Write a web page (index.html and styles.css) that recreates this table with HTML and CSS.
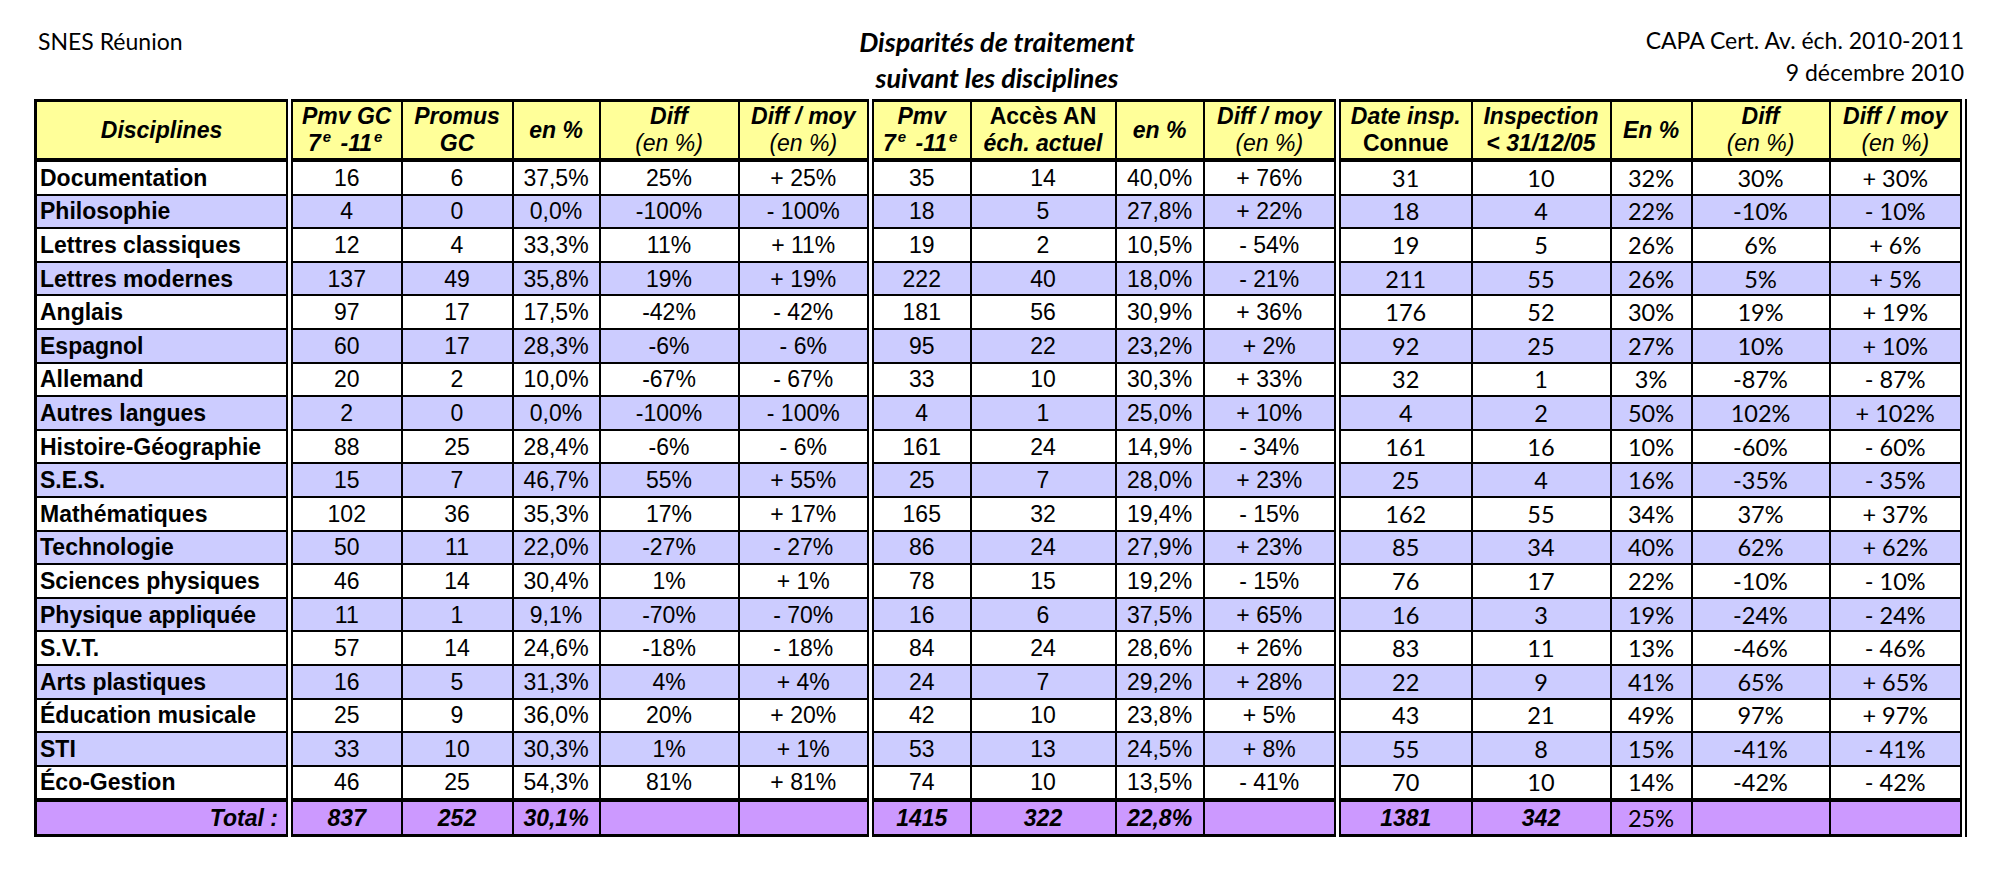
FILE: index.html
```html
<!DOCTYPE html>
<html lang="fr">
<head>
<meta charset="utf-8">
<title>Disparités de traitement suivant les disciplines</title>
<link rel="stylesheet" href="styles.css">
</head>
<body>
<div class="top">
  <div class="org">SNES Réunion</div>
  <div class="title">Disparités de traitement<br>suivant les disciplines</div>
  <div class="meta">CAPA Cert. Av. éch. 2010-2011<br><span class="date">9 décembre 2010</span></div>
</div>
<table class="grid">
  <colgroup>
    <col class="w-disc"><col class="w-a"><col class="w-b"><col class="w-c"><col class="w-d"><col class="w-e">
    <col class="w-f"><col class="w-g"><col class="w-h"><col class="w-i">
    <col class="w-j"><col class="w-k"><col class="w-l"><col class="w-m"><col class="w-n">
  </colgroup>
  <thead>
    <tr class="head">
      <th class="sep">Disciplines</th>
      <th>Pmv GC<br>7<sup>e</sup> -11<sup>e</sup></th>
      <th>Promus<br>GC</th>
      <th>en %</th>
      <th>Diff<br><span class="reg">(en %)</span></th>
      <th class="sep">Diff / moy<br><span class="reg">(en %)</span></th>
      <th>Pmv<br>7<sup>e</sup> -11<sup>e</sup></th>
      <th><span class="up">Accès AN</span><br>éch. actuel</th>
      <th>en %</th>
      <th class="sep">Diff / moy<br><span class="reg">(en %)</span></th>
      <th>Date insp.<br><span class="up">Connue</span></th>
      <th>Inspection<br>&lt; 31/12/05</th>
      <th>En %</th>
      <th>Diff<br><span class="reg">(en %)</span></th>
      <th class="last">Diff / moy<br><span class="reg">(en %)</span></th>
    </tr>
  </thead>
  <tbody id="rows"></tbody>
  <tfoot>
    <tr class="total">
      <td class="name sep tot-label">Total :</td>
      <td class="bi">837</td><td class="bi">252</td><td class="bi">30,1%</td><td></td><td class="sep"></td>
      <td class="bi">1415</td><td class="bi">322</td><td class="bi">22,8%</td><td class="sep"></td>
      <td class="bi">1381</td><td class="bi">342</td><td class="cal">25%</td><td></td><td class="last"></td>
    </tr>
  </tfoot>
</table>
<script src="app.js"></script>
</body>
</html>
```
FILE: app.js
```js
const data = [
["Documentation","16","6","37,5%","25%","+ 25%","35","14","40,0%","+ 76%","31","10","32%","30%","+ 30%"],
["Philosophie","4","0","0,0%","-100%","- 100%","18","5","27,8%","+ 22%","18","4","22%","-10%","- 10%"],
["Lettres classiques","12","4","33,3%","11%","+ 11%","19","2","10,5%","- 54%","19","5","26%","6%","+ 6%"],
["Lettres modernes","137","49","35,8%","19%","+ 19%","222","40","18,0%","- 21%","211","55","26%","5%","+ 5%"],
["Anglais","97","17","17,5%","-42%","- 42%","181","56","30,9%","+ 36%","176","52","30%","19%","+ 19%"],
["Espagnol","60","17","28,3%","-6%","- 6%","95","22","23,2%","+ 2%","92","25","27%","10%","+ 10%"],
["Allemand","20","2","10,0%","-67%","- 67%","33","10","30,3%","+ 33%","32","1","3%","-87%","- 87%"],
["Autres langues","2","0","0,0%","-100%","- 100%","4","1","25,0%","+ 10%","4","2","50%","102%","+ 102%"],
["Histoire-Géographie","88","25","28,4%","-6%","- 6%","161","24","14,9%","- 34%","161","16","10%","-60%","- 60%"],
["S.E.S.","15","7","46,7%","55%","+ 55%","25","7","28,0%","+ 23%","25","4","16%","-35%","- 35%"],
["Mathématiques","102","36","35,3%","17%","+ 17%","165","32","19,4%","- 15%","162","55","34%","37%","+ 37%"],
["Technologie","50","11","22,0%","-27%","- 27%","86","24","27,9%","+ 23%","85","34","40%","62%","+ 62%"],
["Sciences physiques","46","14","30,4%","1%","+ 1%","78","15","19,2%","- 15%","76","17","22%","-10%","- 10%"],
["Physique appliquée","11","1","9,1%","-70%","- 70%","16","6","37,5%","+ 65%","16","3","19%","-24%","- 24%"],
["S.V.T.","57","14","24,6%","-18%","- 18%","84","24","28,6%","+ 26%","83","11","13%","-46%","- 46%"],
["Arts plastiques","16","5","31,3%","4%","+ 4%","24","7","29,2%","+ 28%","22","9","41%","65%","+ 65%"],
["Éducation musicale","25","9","36,0%","20%","+ 20%","42","10","23,8%","+ 5%","43","21","49%","97%","+ 97%"],
["STI","33","10","30,3%","1%","+ 1%","53","13","24,5%","+ 8%","55","8","15%","-41%","- 41%"],
["Éco-Gestion","46","25","54,3%","81%","+ 81%","74","10","13,5%","- 41%","70","10","14%","-42%","- 42%"]
];
const body = document.getElementById("rows");
const sepCols = [0, 5, 9];
data.forEach((row, i) => {
  const tr = document.createElement("tr");
  tr.className = i % 2 ? "row alt" : "row";
  row.forEach((v, j) => {
    const td = document.createElement("td");
    td.textContent = v;
    const cls = [];
    if (j === 0) cls.push("name");
    if (sepCols.includes(j)) cls.push("sep");
    if (j >= 10) cls.push("cal");
    if (j === 14) cls.push("last");
    td.className = cls.join(" ");
    tr.appendChild(td);
  });
  body.appendChild(tr);
});
```
FILE: styles.css
```css
html, body {
  margin: 0;
  padding: 0;
  background: #fff;
}
body {
  width: 1999px;
  height: 887px;
  overflow: hidden;
  color: #000;
}
.top {
  display: grid;
  grid-template-columns: 1fr auto 1fr;
  padding: 24px 35px 0 38px;
  height: 75px;
  font-family: Lato, "Liberation Sans", sans-serif;
  font-size: 23px;
}
.org {
  line-height: 34px;
}
.title {
  font-size: 27px;
  font-weight: bold;
  font-style: italic;
  text-align: center;
  line-height: 36px;
  padding-right: 8px;
}
.meta {
  text-align: right;
  line-height: 32px;
}
.grid {
  margin-left: 34px;
  border-collapse: collapse;
  table-layout: fixed;
  width: 1930px;
  font-family: "Liberation Sans", Arial, sans-serif;
  font-size: 23px;
  border-top: 3px solid #000;
  border-left: 3px solid #000;
  border-bottom: 3px solid #000;
}
.w-disc { width: 254px; }
.w-a { width: 112px; }
.w-b { width: 111px; }
.w-c { width: 87px; }
.w-d { width: 139px; }
.w-e { width: 132px; }
.w-f { width: 100px; }
.w-g { width: 145px; }
.w-h { width: 88px; }
.w-i { width: 134px; }
.w-j { width: 134px; }
.w-k { width: 139px; }
.w-l { width: 81px; }
.w-m { width: 138px; }
.w-n { width: 134px; }
th, td {
  border: 2px solid #000;
  padding: 0;
  text-align: center;
  vertical-align: middle;
  white-space: nowrap;
  overflow: hidden;
}
.head th {
  background: #ffff99;
  height: 56px;
  line-height: 27px;
  font-style: italic;
  font-weight: bold;
  border-bottom: 4px solid #000;
}
.head sup {
  font-size: 15px;
  line-height: 0;
  vertical-align: 9px;
  padding: 0 3px 0 2px;
}
.reg {
  font-weight: normal;
}
.up {
  font-style: normal;
}
.row td {
  height: 31.6px;
  background: #fff;
  line-height: 26px;
}
.row.alt td {
  background: #ccccff;
}
.name {
  text-align: left;
  font-weight: bold;
  padding-left: 3px;
}
.cal {
  font-family: Lato, "Liberation Sans", sans-serif;
  font-size: 23.5px;
}
.sep {
  border-right: 7px double #000;
}
.last {
  border-right: 7px double #000;
}
.total td {
  background: #cc99ff;
  height: 32px;
  border-top: 4px solid #000;
}
.tot-label {
  text-align: right;
  font-style: italic;
  padding-right: 8px;
}
.bi {
  font-weight: bold;
  font-style: italic;
}
```
